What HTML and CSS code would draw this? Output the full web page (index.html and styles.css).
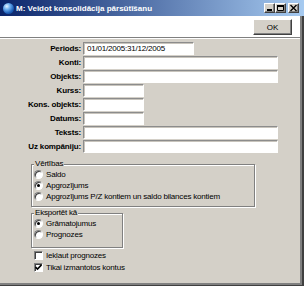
FILE: index.html
```html
<!DOCTYPE html>
<html lang="lv">
<head>
  <meta charset="UTF-8">
  <title>M: Veidot konsolidācija pārsūtīšanu</title>
  <link rel="stylesheet" href="styles.css">
</head>
<body>
  <div class="window">
    <div class="titlebar">
      <span class="titlebar__icon"></span>
      <span class="titlebar__text">M: Veidot konsolidācija pārsūtīšanu</span>
      <div class="titlebar__buttons">
        <span class="tbtn">
          <svg width="9" height="8" viewBox="0 0 9 8"><rect x="2" y="5" width="5" height="2" fill="#000"/></svg>
        </span>
        <span class="tbtn">
          <svg width="9" height="8" viewBox="0 0 9 8"><path d="M1.5 1.5h6v5h-6z" fill="none" stroke="#000"/><rect x="1" y="1" width="7" height="2" fill="#000"/></svg>
        </span>
        <span class="tbtn tbtn--close">
          <svg width="9" height="8" viewBox="0 0 9 8"><path d="M1.5 1l6 6M7.5 1l-6 6" stroke="#000" stroke-width="1.4"/></svg>
        </span>
      </div>
    </div>

    <div class="main">
      <div class="frame">
        <div class="toolbar">
          <button class="button">OK</button>
        </div>

        <div class="content">
          <div class="form">
            <label class="form__label">Periods:</label>
            <div class="field field--mid">01/01/2005:31/12/2005</div>

            <label class="form__label">Konti:</label>
            <div class="field field--long"></div>

            <label class="form__label">Objekts:</label>
            <div class="field field--long"></div>

            <label class="form__label">Kurss:</label>
            <div class="field field--short"></div>

            <label class="form__label">Kons. objekts:</label>
            <div class="field field--short"></div>

            <label class="form__label">Datums:</label>
            <div class="field field--short"></div>

            <label class="form__label">Teksts:</label>
            <div class="field field--long"></div>

            <label class="form__label">Uz kompāniju:</label>
            <div class="field field--long"></div>
          </div>

          <fieldset class="group group--values">
            <legend class="group__title">Vērtības</legend>
            <div class="option"><span class="radio"></span>Saldo</div>
            <div class="option"><span class="radio is-checked"></span>Apgrozījums</div>
            <div class="option"><span class="radio"></span>Apgrozījums P/Z kontiem un saldo bilances kontiem</div>
          </fieldset>

          <fieldset class="group group--export">
            <legend class="group__title">Eksportēt kā</legend>
            <div class="option"><span class="radio is-checked"></span>Grāmatojumus</div>
            <div class="option"><span class="radio"></span>Prognozes</div>
          </fieldset>

          <div class="checks">
            <div class="check"><span class="checkbox"></span>Iekļaut prognozes</div>
            <div class="check">
              <span class="checkbox">
                <svg width="7" height="7" viewBox="0 0 7 7"><path d="M0.5 3l2 2 4-4.2" fill="none" stroke="#000" stroke-width="1.6"/></svg>
              </span>Tikai izmantotos kontus
            </div>
          </div>
        </div>
      </div>
    </div>
  </div>
</body>
</html>
```

FILE: styles.css
```css
:root {
  --face: #d4d0c8;
  --shadow: #808080;
  --dark: #404040;
}

* {
  box-sizing: border-box;
}

html, body {
  margin: 0;
  padding: 0;
  width: 304px;
  height: 286px;
  overflow: hidden;
  background: var(--face);
  font-family: "Liberation Sans", Arial, sans-serif;
  font-size: 8px;
  color: #000;
}

.window {
  display: flex;
  flex-direction: column;
  height: 286px;
}

/* title bar */
.titlebar {
  display: flex;
  align-items: center;
  height: 16px;
  padding: 0 5px 0 3px;
  background: linear-gradient(to right, #0a246a, #a6caf0);
  color: #fff;
  font-weight: bold;
}

.titlebar__icon {
  width: 11px;
  height: 11px;
  margin-right: 2px;
  border-radius: 50%;
  background: radial-gradient(circle at 35% 30%, #e8f4ff 0, #6fb0f0 30%, #1d5fb8 65%, #0c3478 100%);
}

.titlebar__text {
  flex: 1;
  white-space: nowrap;
}

.titlebar__buttons {
  display: flex;
}

.tbtn {
  display: flex;
  align-items: center;
  justify-content: center;
  width: 11px;
  height: 10px;
  background: var(--face);
  border: 1px solid;
  border-color: #fff var(--dark) var(--dark) #fff;
  box-shadow: inset -1px -1px 0 var(--shadow);
}

.tbtn svg {
  display: block;
}

.tbtn--close {
  margin-left: 2px;
}

/* window frame */
.main {
  flex: 1;
  display: flex;
  flex-direction: column;
  border-right: 2px solid var(--dark);
  border-bottom: 1px solid var(--dark);
}

.frame {
  flex: 1;
  display: flex;
  flex-direction: column;
  border-right: 2px solid var(--shadow);
  border-bottom: 2px solid var(--shadow);
}

.toolbar {
  display: flex;
  justify-content: flex-end;
  height: 22px;
  padding: 3px 8px 0 0;
  background: #fff;
  border-bottom: 1px solid var(--shadow);
}

.button {
  width: 39px;
  height: 16px;
  padding: 0;
  background: var(--face);
  border: 1px solid;
  border-color: #fff var(--dark) var(--dark) #fff;
  box-shadow: inset -1px -1px 0 var(--shadow);
  font-family: inherit;
  font-size: 8px;
  color: #000;
}

.content {
  flex: 1;
  border-top: 1px solid #fff;
  padding-top: 3px;
}

/* fields */
.form {
  display: grid;
  grid-template-columns: 81px auto;
  column-gap: 2px;
  row-gap: 1px;
  align-items: center;
}

.form__label {
  text-align: right;
  font-weight: bold;
  line-height: 13px;
  letter-spacing: -0.15px;
  white-space: nowrap;
}

.field {
  height: 13px;
  padding: 0 3px;
  background: #fff;
  border: 1px solid;
  border-color: #8c8c8c #fff #fff #8c8c8c;
  box-shadow: inset 1px 1px 0 #c8c4bc;
  line-height: 11px;
  letter-spacing: -0.2px;
  justify-self: start;
}

.field--short {
  width: 61px;
}

.field--mid {
  width: 111px;
}

.field--long {
  width: 195px;
}

/* group boxes */
.group {
  margin: 6px 0 0 31px;
  padding: 0 2px 4px 2px;
  border: 1px solid var(--shadow);
  box-shadow: inset 1px 1px 0 #fff, 1px 1px 0 #fff;
}

.group--values {
  width: 224px;
}

.group--export {
  width: 92px;
  margin-top: 1px;
  padding-bottom: 7px;
}

.group__title {
  padding: 0 1px;
  margin-left: 0;
  line-height: 10px;
  letter-spacing: -0.2px;
  background: var(--face);
}

.option,
.check {
  display: flex;
  align-items: center;
  gap: 2px;
  height: 11px;
  letter-spacing: -0.2px;
  white-space: nowrap;
}

.radio {
  position: relative;
  width: 9px;
  height: 9px;
  margin-right: 1px;
  border-radius: 50%;
  background: #fff;
  border: 1px solid;
  border-color: var(--shadow) #fff #fff var(--shadow);
  box-shadow: inset 1px 1px 0 var(--dark);
}

.radio.is-checked::after {
  content: '';
  position: absolute;
  top: 2px;
  left: 2px;
  width: 3px;
  height: 3px;
  border-radius: 50%;
  background: #000;
}

/* checkboxes */
.checks {
  margin: 1px 0 0 34px;
}

.check {
  height: 12px;
  gap: 3px;
}

.checkbox {
  display: flex;
  align-items: center;
  justify-content: center;
  width: 9px;
  height: 9px;
  background: #fff;
  border: 1px solid;
  border-color: var(--shadow) #fff #fff var(--shadow);
  box-shadow: inset 1px 1px 0 var(--dark);
}

.checkbox svg {
  display: block;
}
```
